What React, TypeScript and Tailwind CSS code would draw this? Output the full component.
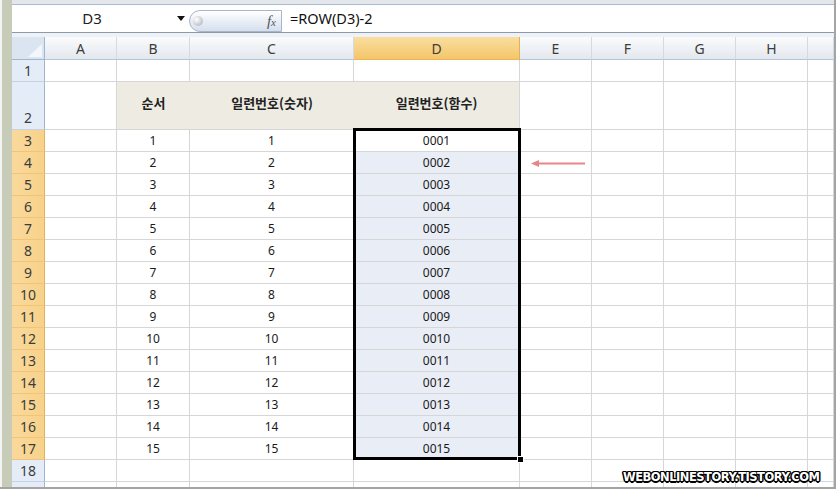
import React from 'react';

const COLS = [
  { k: 'A', w: 'w-[72px]' },
  { k: 'B', w: 'w-[73px]' },
  { k: 'C', w: 'w-[164px]' },
  { k: 'D', w: 'w-[166px]' },
  { k: 'E', w: 'w-[72px]' },
  { k: 'F', w: 'w-[72px]' },
  { k: 'G', w: 'w-[72px]' },
  { k: 'H', w: 'w-[72px]' },
  { k: 'I', w: 'w-[26px]' },
];

const cellBase =
  'shrink-0 h-full border-r border-b border-[#d6d6d6] flex items-center justify-center';

function RowHead({ n, sel, tall }: { n: number; sel?: boolean; tall?: boolean }) {
  return (
    <div
      className={
        'shrink-0 w-[33px] h-full border-r border-b flex justify-center text-[14px] text-[#3c3c3c] ' +
        (tall ? 'items-end pb-[1px] ' : 'items-center ') +
        (sel
          ? 'bg-linear-to-r from-[#f9d99c] to-[#f8d28a] border-r-[#e4b05a] border-b-[#f2c477]'
          : 'bg-[#e4ecf7] border-r-[#9eb6ce] border-b-[#c5d2e2]')
      }
    >
      {n}
    </div>
  );
}

function EmptyRow({ n, h = 'h-[22px]' }: { n: number; h?: string }) {
  return (
    <div className={'flex shrink-0 ' + h}>
      <RowHead n={n} />
      {COLS.map((c) => (
        <div key={c.k} className={cellBase + ' ' + c.w} />
      ))}
    </div>
  );
}

function DataRow({ n }: { n: number }) {
  const v = n - 2;
  const d = String(v).padStart(4, '0');
  return (
    <div className="flex shrink-0 h-[22px]">
      <RowHead n={n} sel />
      {COLS.map((c) => {
        let content: string | null = null;
        let bg = '';
        if (c.k === 'B' || c.k === 'C') content = String(v);
        if (c.k === 'D') {
          content = d;
          bg = n === 3 ? ' bg-white' : ' bg-[#e9edf6]';
        }
        return (
          <div key={c.k} className={cellBase + ' ' + c.w + bg}>
            {content !== null && <span className="text-[12px] text-[#1a1a1a] leading-none">{content}</span>}
          </div>
        );
      })}
    </div>
  );
}

export default function App() {
  const dataRows = Array.from({ length: 15 }, (_, i) => i + 3);
  return (
    <div className="relative w-[840px] h-[493px] bg-white overflow-hidden font-['Noto_Sans','Noto_Sans_CJK_KR',sans-serif]">
      <div className="w-[836px] h-[489px] flex border-r-2 border-b-2 border-[#a4a4a4] bg-[#f3f3f3]">
        <div className="w-[2px] shrink-0 bg-[#f4f4f4]" />
        <div className="w-[10px] shrink-0 bg-[#c7ccb9]" />
        <div className="flex-1 min-w-0 flex flex-col">
          {/* top band */}
          <div className="h-[4px] shrink-0 bg-[#e3e6ea]" />
          {/* formula bar */}
          <div className="h-[29px] shrink-0 flex border-t border-t-[#a9bcd3] border-b border-b-[#8d9aab] bg-white">
            <div className="w-[177px] shrink-0 flex items-center">
              <div className="flex-1 text-center text-[15px] text-[#222] leading-none">D3</div>
              <div className="w-[17px] flex justify-center items-center">
                <svg width="8" height="5" viewBox="0 0 8 5">
                  <path d="M0 0 H8 L4 5 Z" fill="#111" />
                </svg>
              </div>
            </div>
            <div className="w-[93px] shrink-0 h-[22px] self-end flex items-center rounded-l-full border border-r border-[#a7b6ca] bg-linear-to-b from-[#ffffff] to-[#d5dfed]">
              <div className="ml-[3px] w-[10px] h-[10px] rounded-full bg-[radial-gradient(circle_at_35%_35%,#ffffff,#a6aab0)]" />
              <div className="flex-1" />
              <span className="mr-[5px] font-['Liberation_Serif',serif] italic text-[15px] text-[#555] leading-none">
                f<span className="text-[11px]">x</span>
              </span>
            </div>
            <div className="flex-1 flex items-center pl-[8px] text-[14.5px] text-[#111] leading-none">=ROW(D3)-2</div>
          </div>
          {/* gap */}
          <div className="h-[4px] shrink-0 bg-[#eef1f5]" />
          {/* sheet */}
          <div className="flex-1 min-h-0 overflow-hidden flex flex-col bg-white">
            {/* column header */}
            <div className="flex shrink-0 h-[23px]">
              <div className="shrink-0 w-[33px] h-full border-r border-b border-[#9eb6ce] bg-[#dbe5f2] flex items-end justify-end pr-[2px] pb-[2px]">
                <svg width="14" height="13" viewBox="0 0 14 13">
                  <path d="M14 0 V13 H0 Z" fill="#f3f6fa" />
                </svg>
              </div>
              {COLS.map((c) => (
                <div
                  key={c.k}
                  className={
                    'shrink-0 h-full border-r border-b flex items-center justify-center text-[14px] text-[#3c3c3c] ' +
                    c.w +
                    (c.k === 'D'
                      ? ' bg-linear-to-b from-[#fade9f] to-[#f3c669] border-r-[#e2b058] border-b-[#efb454]'
                      : ' bg-linear-to-b from-[#fafbfc] to-[#e3e8ee] border-r-[#d3dae3] border-b-[#b5c4d6]')
                  }
                >
                  {c.k !== 'I' ? c.k : ''}
                </div>
              ))}
            </div>
            <EmptyRow n={1} />
            {/* row 2 */}
            <div className="flex shrink-0 h-[48px]">
              <RowHead n={2} tall />
              <div className={cellBase + ' w-[72px]'} />
              <div className="shrink-0 w-[73px] h-full border-b border-[#d6d6d6] bg-[#eeece2] flex items-center justify-center pb-[6px]">
                <span className="font-['Noto_Sans_CJK_KR',sans-serif] font-bold text-[13px] text-[#222]">순서</span>
              </div>
              <div className="shrink-0 w-[164px] h-full border-b border-[#d6d6d6] bg-[#eeece2] flex items-center justify-center pb-[6px]">
                <span className="font-['Noto_Sans_CJK_KR',sans-serif] font-bold text-[13px] text-[#222]">일련번호(숫자)</span>
              </div>
              <div className="shrink-0 w-[166px] h-full border-b border-r border-[#d6d6d6] bg-[#eeece2] flex items-center justify-center pb-[6px]">
                <span className="font-['Noto_Sans_CJK_KR',sans-serif] font-bold text-[13px] text-[#222]">일련번호(함수)</span>
              </div>
              {COLS.slice(4).map((c) => (
                <div key={c.k} className={cellBase + ' ' + c.w} />
              ))}
            </div>
            {dataRows.map((n) => (
              <DataRow key={n} n={n} />
            ))}
            <EmptyRow n={18} />
            <EmptyRow n={19} />
          </div>
        </div>
      </div>

      {/* selection outline */}
      <div className="absolute left-[353px] top-[128px] w-[168px] h-[332px] border-[3px] border-black pointer-events-none" />
      <div className="absolute left-[517px] top-[456px] w-[7px] h-[7px] bg-black border border-white" />

      {/* arrow */}
      <svg className="absolute left-[528px] top-[157px]" width="60" height="13" viewBox="0 0 60 13">
        <line x1="6" y1="6.5" x2="57" y2="6.5" stroke="#e8878a" strokeWidth="1.8" />
        <path d="M3 6.5 L11 3 L11 10 Z" fill="#e8878a" />
      </svg>

      {/* watermark */}
      <div className="absolute left-[623px] top-[472px] font-['DejaVu_Sans',sans-serif] font-bold text-[11.5px] leading-none tracking-[-0.5px] text-white [text-shadow:-1px_-1px_0_#000,1px_-1px_0_#000,-1px_1px_0_#000,1px_1px_0_#000,0_1.5px_0_#000,0_-1.5px_0_#000,1.5px_0_0_#000,-1.5px_0_0_#000]">
        WEBONLINESTORY.TISTORY.COM
      </div>
    </div>
  );
}
